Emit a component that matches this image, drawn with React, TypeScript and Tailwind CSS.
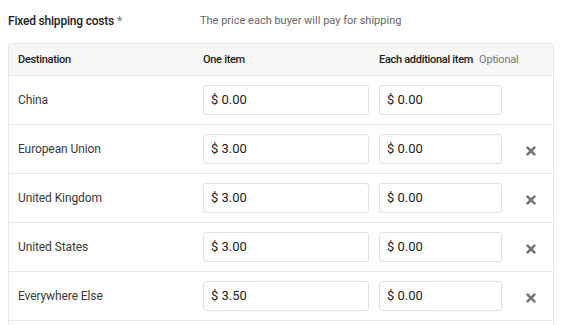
import { useState } from "react";

const rows = [
  { id: 1, name: "China", one: "0.00", extra: "0.00", removable: false },
  { id: 2, name: "European Union", one: "3.00", extra: "0.00", removable: true },
  { id: 3, name: "United Kingdom", one: "3.00", extra: "0.00", removable: true },
  { id: 4, name: "United States", one: "3.00", extra: "0.00", removable: true },
  { id: 5, name: "Everywhere Else", one: "3.50", extra: "0.00", removable: true },
];

const RemoveIcon = () => (
  <svg width="10" height="10" viewBox="0 0 10 10" className="text-[#737373]">
    <path d="M1.6 1.6L8.4 8.4M8.4 1.6L1.6 8.4" stroke="currentColor" strokeWidth="2.6" strokeLinecap="round" />
  </svg>
);

const PriceInput = ({ value, width }: { value: string; width: string }) => (
  <div className={`${width} h-[30px] flex items-center px-[7px] border border-[#e0e0e0] rounded-[3px] bg-white text-[13px] text-[#222222]`}>
    $ {value}
  </div>
);

const App = () => {
  const [items] = useState(rows);

  return (
    <div className="w-[570px] h-[325px] overflow-hidden bg-white pl-[8px] pr-[16px] pt-[11px] font-['Roboto','Liberation_Sans',sans-serif]">
      {/* Section label */}
      <div className="flex items-center h-[20px]">
        <span className="w-[192px] text-[12px] font-medium tracking-[-0.2px] text-[#222222]">
          Fixed shipping costs <span className="font-normal text-[#777777]">*</span>
        </span>
        <span className="text-[11px] text-[#666666]">The price each buyer will pay for shipping</span>
      </div>

      {/* Table */}
      <div className="mt-[12px] border border-[#e8e8e8] rounded-t-[3px]">
        <div className="flex items-center h-[32px] pt-[2px] bg-[#f7f7f5] border-b border-[#e8e8e8] pl-[9px] text-[11px] font-medium tracking-[-0.3px] text-[#222222]">
          <span className="w-[185px]">Destination</span>
          <span className="w-[176px]">One item</span>
          <span>
            Each additional item
            <span className="ml-[6px] font-normal tracking-[-0.2px] text-[#777777]">Optional</span>
          </span>
        </div>

        {items.map((row) => (
          <div key={row.id} className="flex items-center h-[49px] border-b border-[#e8e8e8] pl-[9px]">
            <span className="w-[185px] text-[12px] tracking-[-0.1px] text-[#3a3a3a]">{row.name}</span>
            <PriceInput value={row.one} width="w-[166px]" />
            <div className="w-[10px]" />
            <PriceInput value={row.extra} width="w-[123px]" />
            {row.removable && (
              <button className="ml-[24px] mt-[4px] flex items-center">
                <RemoveIcon />
              </button>
            )}
          </div>
        ))}

        <div className="h-[30px]" />
      </div>
    </div>
  );
};

export default App;
